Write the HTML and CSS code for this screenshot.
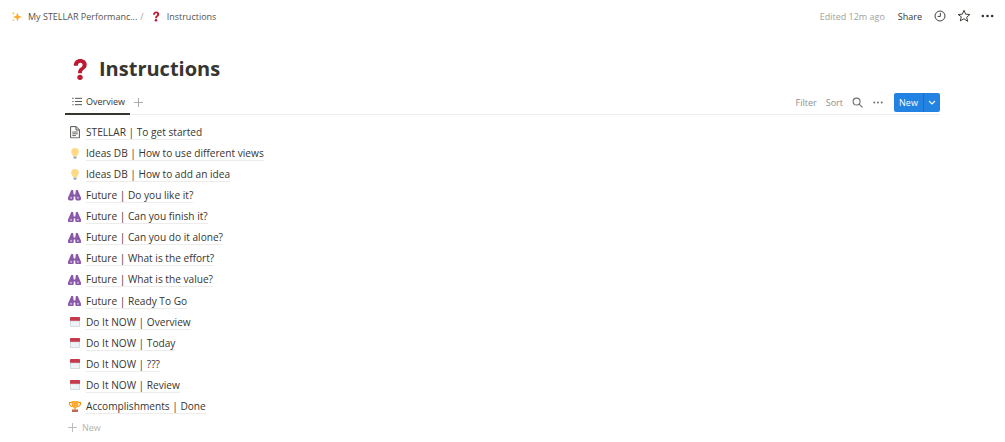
FILE: index.html
```html
<!DOCTYPE html>
<html lang="en">
<head>
<meta charset="utf-8">
<title>Instructions</title>
<link rel="stylesheet" href="styles.css">
</head>
<body>
<svg class="defs" width="0" height="0" aria-hidden="true">
  <symbol id="q" viewBox="0 0 16 24"><path d="M1.500 8C1.500 3.800 4.500 1 8.300 1 12.300 1 15 3.500 15 7 15 9.700 13.500 11 11.800 12.300 10.300 13.400 10 14 10 15.800H6C6 13 6.600 11.600 8.500 10.200 10 9.100 10.700 8.500 10.700 7.200 10.700 5.900 9.800 5 8.300 5 6.800 5 5.800 6.100 5.700 8Z" fill="#be1931"/><circle cx="8" cy="20.200" r="2.800" fill="#be1931"/></symbol>
  <symbol id="doc" viewBox="0 0 10 12.500"><path d="M.6.600h5.600l3.200 3.200v8.100H.6z M6 .6v3.400h3.400" fill="none" stroke="#55534e" stroke-width="1"/><path d="M2.300 6h5.400M2.300 7.800h5.400M2.300 9.600h3.600" stroke="#55534e" stroke-width=".9"/></symbol>
  <symbol id="bulb" viewBox="0 0 8 11"><path d="M4 0a3.800 3.800 0 0 0-3.800 3.800c0 1.700 1 2.400 1.500 3.400.2.400.3.800.3 1.100h4c0-.3.100-.7.300-1.100.5-1 1.500-1.700 1.500-3.400A3.800 3.800 0 0 0 4 0z" fill="#ffd983"/><path d="M2.400 8.500h3.200v1.300l-.8 1H3.200l-.8-1z" fill="#99aab5"/></symbol>
  <symbol id="bino" viewBox="0 0 13 10.500"><path d="M3.300 0h1.800l.6 4.500h1.600L7.900 0h1.800l2.900 6.700a2.900 2.900 0 1 1-5.300 1.700V6.500H5.700v1.900A2.900 2.900 0 1 1 .4 6.700z" fill="#8a58a8"/><circle cx="3.100" cy="7.800" r="1.100" fill="#c7a8dc"/><circle cx="9.900" cy="7.800" r="1.100" fill="#c7a8dc"/></symbol>
  <symbol id="cal" viewBox="0 0 10 10"><rect width="10" height="10" rx="1" fill="#ccd6dd"/><path d="M0 3.800V1a1 1 0 0 1 1-1h8a1 1 0 0 1 1 1v2.800z" fill="#c8394b"/><rect x=".8" y="4.400" width="8.400" height="4.800" fill="#f0f3f5"/></symbol>
  <symbol id="cup" viewBox="0 0 12 11"><path d="M0 1h12v1.800C12 4.800 10.400 6 8.800 6H3.200C1.600 6 0 4.800 0 2.800z M1.200 2v.9C1.200 4.100 2.200 5 3.200 5h5.600c1 0 2-.9 2-2.100V2z" fill="#f4900c" fill-rule="evenodd"/><path d="M2.600 0h6.800v3.200c0 2.200-1.500 3.500-2.500 3.900v1.400H5.100V7.100C4.100 6.700 2.600 5.400 2.600 3.200z" fill="#ffac33"/><path d="M3 8.500h6V11H3z" fill="#c1694f"/></symbol>
  <symbol id="spark" viewBox="0 0 12 12"><path d="M7 1.500 8.300 5.200 12 6.500 8.300 7.800 7 11.500 5.700 7.800 2 6.500 5.700 5.200z" fill="#ffac33"/><path d="M2.500 .5 3.100 1.900 4.500 2.500 3.100 3.100 2.500 4.500 1.900 3.100 .5 2.500 1.900 1.900z" fill="#ffcc4d"/><path d="M2.500 8.500 3 9.500 4 10 3 10.500 2.500 11.500 2 10.500 1 10 2 9.500z" fill="#ffcc4d"/></symbol>
</svg>

<header class="topbar">
  <nav class="crumbs">
    <svg class="crumb-icon"><use href="#spark"/></svg>
    <span class="crumb-text crumb-parent">My STELLAR Performanc...</span>
    <span class="crumb-sep">/</span>
    <svg class="crumb-q"><use href="#q"/></svg>
    <span class="crumb-text">Instructions</span>
  </nav>
  <div class="actions">
    <span class="edited">Edited 12m ago</span>
    <span class="share">Share</span>
    <svg class="clock" viewBox="0 0 14 14"><circle cx="7" cy="7" r="5.800" fill="none" stroke="#37352f" stroke-width="1.100"/><path d="M7.400 3.300V7.500H4.300" fill="none" stroke="#37352f" stroke-width="1.100"/></svg>
    <svg class="star" viewBox="0 0 16 16"><path d="M8 1.500l1.900 4.400 4.800.4-3.600 3.100 1.100 4.700L8 11.100l-4.200 2.500 1.100-4.700L1.300 6.300l4.800-.4z" fill="none" stroke="#37352f" stroke-width="1.100" stroke-linejoin="round"/></svg>
    <svg class="dots" viewBox="0 0 14 4"><circle cx="2" cy="2" r="1.400"/><circle cx="7" cy="2" r="1.400"/><circle cx="12" cy="2" r="1.400"/></svg>
  </div>
</header>

<main class="page">
  <h1 class="title"><svg class="title-icon"><use href="#q"/></svg><span>Instructions</span></h1>

  <div class="toolbar">
    <div class="tabs">
      <div class="tab">
        <svg class="list-icon" viewBox="0 0 12 10"><path d="M3.500 1.200H12M3.500 5H12M3.500 8.800H12" stroke="#37352f" stroke-width="1"/><path d="M.5 1.200h1.200M.5 5h1.200M.5 8.800h1.200" stroke="#37352f" stroke-width="1.300"/></svg>
        <span>Overview</span>
      </div>
      <svg class="tab-add" viewBox="0 0 10 10"><path d="M5 0v10M0 5h10" stroke="#a5a4a0" stroke-width="1"/></svg>
    </div>
    <div class="tools">
      <span class="tool">Filter</span>
      <span class="tool">Sort</span>
      <svg class="search" viewBox="0 0 12 12"><circle cx="5" cy="5" r="3.800" fill="none" stroke="#6f6e69" stroke-width="1.200"/><path d="M7.800 7.800l3.600 3.600" stroke="#6f6e69" stroke-width="1.300"/></svg>
      <svg class="tool-dots" viewBox="0 0 10 3"><circle cx="1.300" cy="1.500" r="1"/><circle cx="5" cy="1.500" r="1"/><circle cx="8.700" cy="1.500" r="1"/></svg>
      <div class="new-btn">
        <span class="new-label">New</span>
        <span class="new-arrow"><svg viewBox="0 0 8 5"><path d="M1 1l3 3 3-3" fill="none" stroke="#fff" stroke-width="1.100"/></svg></span>
      </div>
    </div>
  </div>

  <ul class="list">
    <li class="row"><span class="ico"><svg class="ico-doc"><use href="#doc"/></svg></span><span class="name">STELLAR | To get started</span></li>
    <li class="row"><span class="ico"><svg class="ico-bulb"><use href="#bulb"/></svg></span><span class="name">Ideas DB | How to use different views</span></li>
    <li class="row"><span class="ico"><svg class="ico-bulb"><use href="#bulb"/></svg></span><span class="name">Ideas DB | How to add an idea</span></li>
    <li class="row"><span class="ico"><svg class="ico-bino"><use href="#bino"/></svg></span><span class="name">Future | Do you like it?</span></li>
    <li class="row"><span class="ico"><svg class="ico-bino"><use href="#bino"/></svg></span><span class="name">Future | Can you finish it?</span></li>
    <li class="row"><span class="ico"><svg class="ico-bino"><use href="#bino"/></svg></span><span class="name">Future | Can you do it alone?</span></li>
    <li class="row"><span class="ico"><svg class="ico-bino"><use href="#bino"/></svg></span><span class="name">Future | What is the effort?</span></li>
    <li class="row"><span class="ico"><svg class="ico-bino"><use href="#bino"/></svg></span><span class="name">Future | What is the value?</span></li>
    <li class="row"><span class="ico"><svg class="ico-bino"><use href="#bino"/></svg></span><span class="name">Future | Ready To Go</span></li>
    <li class="row"><span class="ico"><svg class="ico-cal"><use href="#cal"/></svg></span><span class="name">Do It NOW | Overview</span></li>
    <li class="row"><span class="ico"><svg class="ico-cal"><use href="#cal"/></svg></span><span class="name">Do It NOW | Today</span></li>
    <li class="row"><span class="ico"><svg class="ico-cal"><use href="#cal"/></svg></span><span class="name">Do It NOW | ???</span></li>
    <li class="row"><span class="ico"><svg class="ico-cal"><use href="#cal"/></svg></span><span class="name">Do It NOW | Review</span></li>
    <li class="row"><span class="ico"><svg class="ico-cup"><use href="#cup"/></svg></span><span class="name">Accomplishments | Done</span></li>
    <li class="row row-new"><svg class="ico-new" viewBox="0 0 10 10"><path d="M5 0v10M0 5h10" stroke="#b5b4b0" stroke-width="1"/></svg><span>New</span></li>
  </ul>
</main>
</body>
</html>
```
FILE: styles.css
```css
* { box-sizing: border-box; }
html, body { margin: 0; padding: 0; height: 100%; overflow: hidden; }
body { background: #fff; color: #37352f; font-family: "Open Sans", "Liberation Sans", sans-serif; font-size: 9px; }
.defs { position: absolute; }
.topbar { height: 32px; display: flex; align-items: center; justify-content: space-between; padding: 0 11px 0 11px; }
.crumbs { display: flex; align-items: center; }
.crumb-icon { width: 11px; height: 11px; margin-right: 6px; }
.crumb-parent { margin-right: 3px; }
.crumb-sep { color: #a5a4a0; margin-right: 8px; }
.crumb-q { width: 8px; height: 11px; margin-right: 7px; }
.crumb-text { color: #55534e; }
.actions { display: flex; align-items: center; }
.edited { color: #a3a29e; margin-right: 13px; }
.share { margin-right: 12px; }
.clock { width: 12px; height: 12px; margin-right: 11px; }
.star { width: 14px; height: 14px; margin-right: 10px; }
.dots { width: 13px; height: 4px; fill: #37352f; }
.page { padding: 0 65px; }
.title { display: flex; align-items: center; height: 44px; margin: 15px 0 0; font-size: 20px; font-weight: 700; line-height: 1; padding-left: 7px; }
.title-icon { width: 16px; height: 23px; margin-right: 11px; }
.toolbar { display: flex; justify-content: space-between; height: 24px; border-bottom: 1px solid #ececeb; }
.tabs { display: flex; align-items: center; }
.tab { display: flex; align-items: center; height: 24px; padding: 0 2px 0 7px; border-bottom: 2px solid #37352f; width: 65px; color: #37352f; }
.list-icon { width: 10px; height: 9px; margin-right: 4px; }
.tab-add { width: 9px; height: 9px; margin-left: 4px; }
.tools { display: flex; align-items: center; color: #8f8e8a; }
.tool { margin-right: 9px; }
.search { width: 11px; height: 11px; margin-right: 10px; }
.tool-dots { width: 10px; height: 3px; fill: #6f6e69; margin-right: 11px; }
.new-btn { display: flex; align-items: stretch; height: 19px; width: 46px; background: #2383e2; border-radius: 2px; color: #fff; }
.new-label { flex: 1; text-align: center; line-height: 19px; border-right: 1px solid #1a6fc4; }
.new-arrow { width: 16px; display: flex; align-items: center; justify-content: center; }
.new-arrow svg { width: 8px; height: 5px; }
.list { list-style: none; margin: 7px 0 0; padding: 0; }
.row { display: flex; align-items: center; height: 21.07px; font-size: 10.15px; }
.ico { width: 21px; padding-right: 2px; display: flex; justify-content: center; align-items: center; flex: none; }
.ico-doc { width: 10px; height: 12.5px; }
.ico-bulb { width: 8px; height: 11px; }
.ico-bino { width: 13px; height: 10.5px; }
.ico-cal { width: 10px; height: 10px; }
.ico-cup { width: 12px; height: 11px; }
.name { border-bottom: 1px solid #ececeb; line-height: 14px; }
.row-new { color: #b5b4b0; font-size: 9px; padding-left: 3px; }
.ico-new { width: 9px; height: 9px; margin: 0 5px 0 0; }
```
